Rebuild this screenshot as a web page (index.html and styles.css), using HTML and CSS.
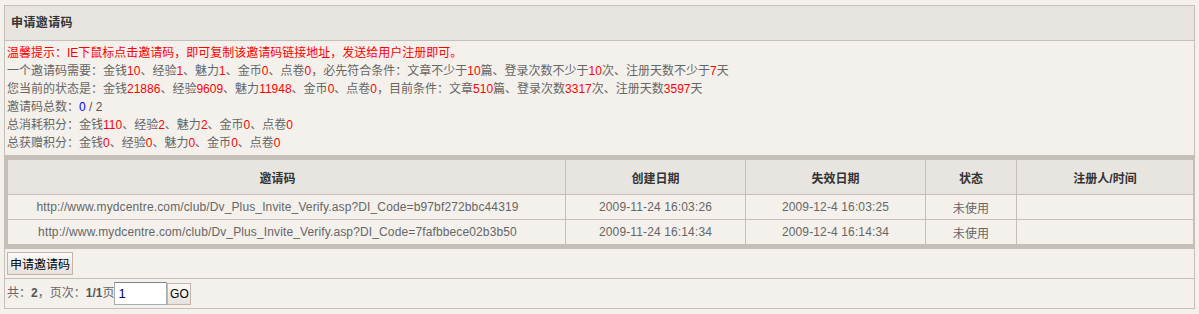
FILE: index.html
```html
<!DOCTYPE html>
<html lang="zh-CN">
<head>
<meta charset="utf-8">
<title>申请邀请码</title>
<link rel="stylesheet" href="styles.css">
</head>
<body>
<div class="panel">
  <div class="panel-head">申请邀请码</div>
  <div class="panel-info">
    <div class="tip">温馨提示：IE下鼠标点击邀请码，即可复制该邀请码链接地址，发送给用户注册即可。</div>
    <div>一个邀请码需要：金钱<span class="num">10</span>、经验<span class="num">1</span>、魅力<span class="num">1</span>、金币<span class="num">0</span>、点卷<span class="num">0</span>，必先符合条件：文章不少于<span class="num">10</span>篇、登录次数不少于<span class="num">10</span>次、注册天数不少于<span class="num">7</span>天</div>
    <div>您当前的状态是：金钱<span class="num">21886</span>、经验<span class="num">9609</span>、魅力<span class="num">11948</span>、金币<span class="num">0</span>、点卷<span class="num">0</span>，目前条件：文章<span class="num">510</span>篇、登录次数<span class="num">3317</span>次、注册天数<span class="num">3597</span>天</div>
    <div>邀请码总数：<span class="blue">0</span><span class="dark"> / 2</span></div>
    <div>总消耗积分：金钱<span class="num">110</span>、经验<span class="num">2</span>、魅力<span class="num">2</span>、金币<span class="num">0</span>、点卷<span class="num">0</span></div>
    <div>总获赠积分：金钱<span class="num">0</span>、经验<span class="num">0</span>、魅力<span class="num">0</span>、金币<span class="num">0</span>、点卷<span class="num">0</span></div>
  </div>
  <table class="codes">
    <colgroup>
      <col class="c1"><col class="c2"><col class="c3"><col class="c4"><col>
    </colgroup>
    <thead>
      <tr><th class="first">邀请码</th><th>创建日期</th><th>失效日期</th><th>状态</th><th class="last">注册人/时间</th></tr>
    </thead>
    <tbody>
      <tr><td class="first">http://www.mydcentre.com/club/Dv_Plus_Invite_Verify.asp?DI_Code=b97bf272bbc44319</td><td>2009-11-24 16:03:26</td><td>2009-12-4 16:03:25</td><td>未使用</td><td class="last"></td></tr>
      <tr class="end"><td class="first">http://www.mydcentre.com/club/Dv_Plus_Invite_Verify.asp?DI_Code=7fafbbece02b3b50</td><td>2009-11-24 16:14:34</td><td>2009-12-4 16:14:34</td><td>未使用</td><td class="last"></td></tr>
    </tbody>
  </table>
  <div class="actions"><button class="btn btn-apply" type="button">申请邀请码</button></div>
  <div class="pager">共：<b>2</b>，页次：<b>1/1</b>页<input class="page-input" type="text" value="1"><button class="btn btn-go" type="button">GO</button></div>
</div>
</body>
</html>
```

FILE: styles.css
```css
html, body {
  margin: 0;
  padding: 0;
  background: #f4f1ec;
}

body {
  font-family: "Liberation Sans", Arial, "Noto Sans CJK SC", sans-serif;
  font-size: 12px;
  color: #666;
}

.panel {
  margin: 5px 4px;
  border: 1px solid #c4bfb8;
  background: #f4f1ec;
}

.panel-head {
  height: 34px;
  line-height: 34px;
  padding: 0 6px;
  background: #e8e5e0;
  border-bottom: 1px solid #c4bfb8;
  font-weight: bold;
  font-size: 12px;
  letter-spacing: 0.4px;
  color: #333;
}

.panel-info {
  padding: 3px 2px 3px;
  line-height: 18px;
  white-space: nowrap;
}

.tip {
  color: #f00;
}

.num {
  color: #f00;
}

.blue {
  color: #00f;
}

.dark {
  color: #555;
}

.codes {
  width: calc(100% + 2px);
  margin: 0 -1px;
  table-layout: fixed;
  border-collapse: separate;
  border-spacing: 0;
  border-style: solid;
  border-color: #c4bfb8;
  border-width: 5px 2px 5px 4px;
}

.codes .c1 { width: 558px; }
.codes .c2 { width: 180px; }
.codes .c3 { width: 180px; }
.codes .c4 { width: 91px; }

.codes th,
.codes td {
  padding: 0;
  text-align: center;
  border-right: 1px solid #c4bfb8;
  border-bottom: 1px solid #c4bfb8;
  white-space: nowrap;
}

.codes .first {
  padding-right: 18px;
}

.codes th {
  height: 34px;
  background: #e8e5e0;
  color: #333;
  font-weight: bold;
}

.codes td {
  height: 24px;
  color: #666;
  letter-spacing: 0.13px;
}

.codes .last {
  border-right: 0;
}

.codes tr.end td {
  border-bottom: 0;
}

.actions {
  padding: 3px 2px;
  height: 23px;
  border-bottom: 1px solid #c4bfb8;
}

.btn {
  font-family: "Noto Sans CJK SC", "Liberation Sans", sans-serif;
  font-size: 12px;
  color: #000;
  background: linear-gradient(#fbfaf8, #e6e1dc);
  border: 1px solid #c8b3a8;
  padding: 0;
  margin: 0;
  line-height: 19px;
  display: inline-block;
  vertical-align: top;
}

.btn-apply {
  width: 66px;
  height: 23px;
}

.btn-go {
  font-family: "Liberation Sans", Arial, sans-serif;
  width: 24px;
  height: 22px;
  margin-top: 1px;
  font-size: 12px;
}

.pager {
  padding: 3px 2px;
  height: 23px;
  line-height: 23px;
  color: #666;
  white-space: nowrap;
}

.pager b {
  color: #555;
}

.page-input {
  box-sizing: border-box;
  width: 53px;
  height: 23px;
  margin: 0;
  padding: 0 0 0 3px;
  border: 1px solid #a5acb5;
  border-top-color: #7b8590;
  background: #fff;
  color: #000080;
  font-family: "Liberation Sans", Arial, sans-serif;
  font-size: 13px;
  vertical-align: top;
}
```
